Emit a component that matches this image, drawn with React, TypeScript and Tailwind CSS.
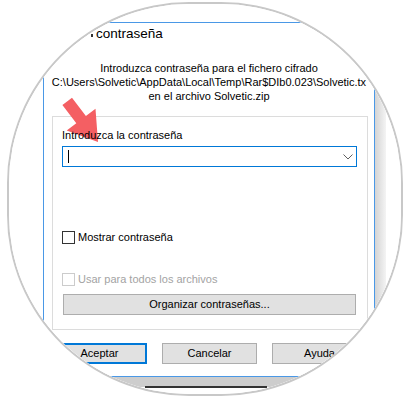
export default function App() {
  const font = { fontFamily: '"Liberation Sans", Arial, sans-serif' }

  return (
    <div className="relative h-[398px] w-[410px] overflow-hidden bg-white" style={font}>
      {/* magnifier lens */}
      <div className="absolute left-[7px] top-[2px] h-[394px] w-[396px] overflow-hidden rounded-[46%] border-2 border-[#c8c8c8] bg-white">
        <div className="absolute -left-[9px] -top-[4px] h-[398px] w-[410px] bg-white">
          {/* window shadow + bottom band */}
          <div className="absolute left-[375px] top-[22px] h-[355px] w-[11px] bg-gradient-to-r from-[#d4d4d4] to-[#f4f4f4]" />
          <div className="absolute left-0 top-[377px] h-[10px] w-[410px] bg-[#cdcdcd]" />
          <div className="absolute left-[145px] top-[386px] h-[1.5px] w-[122px] bg-[#333]" />

          {/* dialog window */}
          <div className="absolute left-[43px] top-[22px] flex h-[355px] w-[332px] flex-col border border-[#4a98e6] bg-white text-[11px] text-black">
            <div className="flex h-[22px] items-center pl-[47px] text-[13.5px]">
              <span className="mr-[3px] mt-[3px] inline-block h-[3px] w-[2px] bg-[#333]" />
              <span>contraseña</span>
            </div>

            <div className="mt-[16px] text-center leading-[14px]">
              <div className="whitespace-nowrap">Introduzca contraseña para el fichero cifrado</div>
              <div className="whitespace-nowrap">C:\Users\Solvetic\AppData\Local\Temp\Rar$DIb0.023\Solvetic.tx</div>
              <div className="whitespace-nowrap">en el archivo Solvetic.zip</div>
            </div>

            <div className="ml-[8px] mt-[13px] flex h-[214px] w-[316px] flex-col border border-[#dcdcdc] pl-[9px]">
              <div className="relative z-10 mt-[11px] leading-[14px]">Introduzca la contraseña</div>
              <div className="mt-[4px] flex h-[21px] w-[295px] items-center justify-between border border-[#0078d7] pl-[5px] pr-[3px]">
                <div className="h-[13px] w-px bg-black" />
                <svg width="10" height="6" viewBox="0 0 10 6" fill="none">
                  <polyline points="0.5,0.5 5,5 9.5,0.5" stroke="#606060" strokeWidth="1" />
                </svg>
              </div>

              <div className="mt-[64px] flex h-[13px] items-center gap-[3px]">
                <div className="h-[13px] w-[13px] border border-[#333]" />
                <span>Mostrar contraseña</span>
              </div>

              <div className="mt-[29px] flex h-[13px] items-center gap-[3px] text-[#a3a3a3]">
                <div className="h-[13px] w-[13px] border border-[#cccccc]" />
                <span>Usar para todos los archivos</span>
              </div>

              <div className="ml-[1px] mt-[8px] flex h-[21px] w-[293px] items-center justify-center border border-[#adadad] bg-[#e1e1e1]">
                Organizar contraseñas...
              </div>
            </div>

            <div className="ml-[8px] mt-[13px] flex gap-[15px]">
              <div className="flex h-[21px] w-[95px] items-center justify-center border-2 border-[#0078d7] bg-[#e1e1e1]">
                Aceptar
              </div>
              <div className="flex h-[21px] w-[95px] items-center justify-center border border-[#adadad] bg-[#e1e1e1]">
                Cancelar
              </div>
              <div className="flex h-[21px] w-[95px] items-center justify-center border border-[#adadad] bg-[#e1e1e1]">
                Ayuda
              </div>
            </div>
          </div>

          {/* red pointer arrow */}
          <svg className="pointer-events-none absolute left-0 top-0" width="410" height="398" viewBox="0 0 410 398">
            <polygon
              points="72,97.7 85.9,116.1 95.5,108.8 98,142 66.7,130.6 76.3,123.3 62.4,104.9"
              fill="#f45f63"
            />
          </svg>
        </div>
      </div>
    </div>
  )
}
